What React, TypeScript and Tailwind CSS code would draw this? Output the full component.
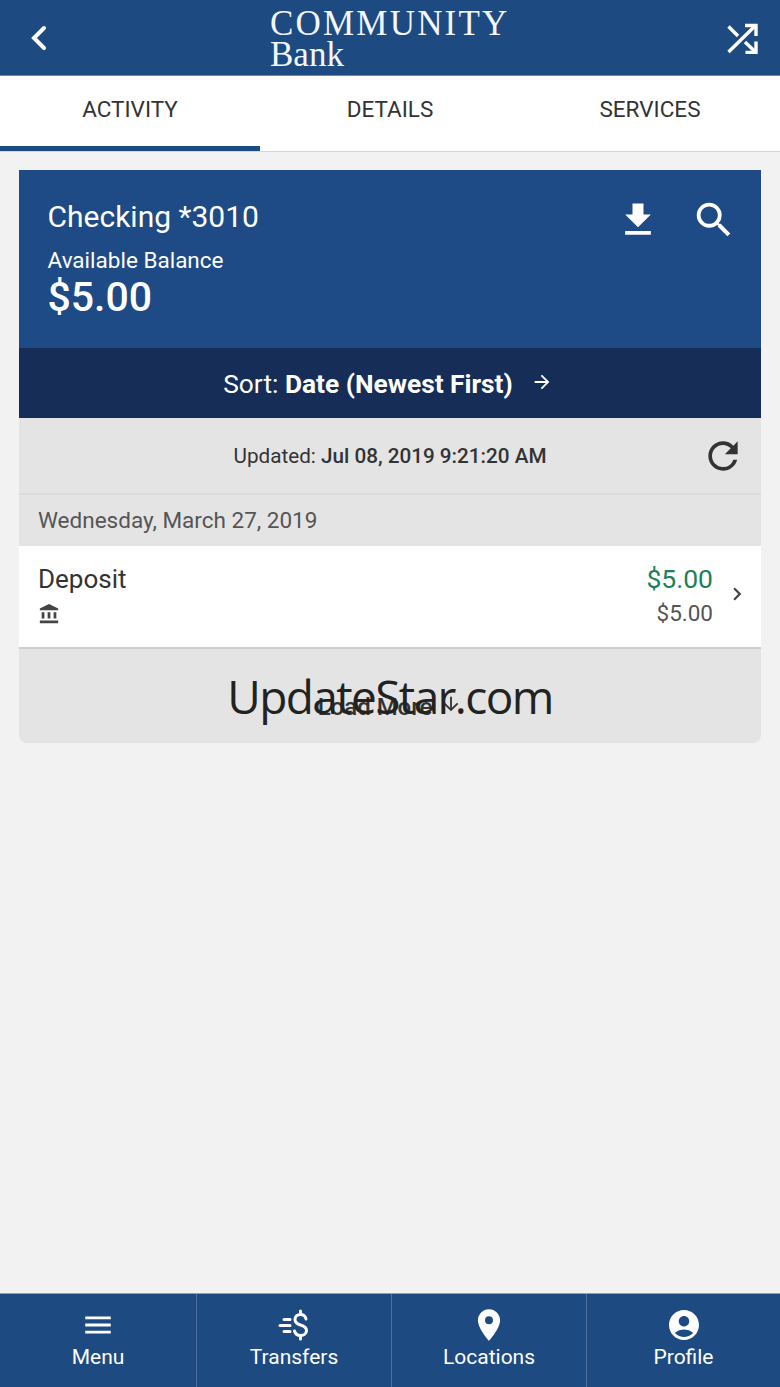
import {
  MdAccountBalance,
  MdAccountCircle,
  MdArrowForward,
  MdChevronRight,
  MdFileDownload,
  MdMenu,
  MdPlace,
  MdRefresh,
  MdSearch,
} from "react-icons/md";

const tabs = ["ACTIVITY", "DETAILS", "SERVICES"];

function TransfersIcon() {
  return (
    <svg width="32" height="32" viewBox="0 0 32 32" fill="none" stroke="white" strokeLinecap="round" strokeWidth="3" className="ml-[-2px]">
      <path d="M7 10.5H13M3 16.5H13M7 22.5H13" />
      <path d="M29 10C28.4 7.2 26.4 5.5 23.5 5.5C20.2 5.5 18 7.6 18 10.5C18 13.6 20.4 15 23.5 16C27 17 29.5 18.5 29.5 21.5C29.5 24.6 27 26.5 23.5 26.5C20.5 26.5 18.3 24.7 17.5 22M23.5 2V5.5M23.5 26.5V30" />
    </svg>
  );
}

function ShuffleIcon() {
  return (
    <svg width="32" height="32" viewBox="0 0 32 32" fill="none" stroke="white" strokeWidth="3.4" className="ml-auto">
      <path d="M2.5 30L29 4M2.5 4.5L12 14M19 20L29 29.5" />
      <path d="M19 3.5H30V14M30 19.5V30.5H19.5" />
    </svg>
  );
}

const navItems = [
  { label: "Menu", icon: <MdMenu className="text-[34px] text-white" /> },
  { label: "Transfers", icon: <TransfersIcon /> },
  { label: "Locations", icon: <MdPlace className="text-[38px] text-white" /> },
  { label: "Profile", icon: <MdAccountCircle className="text-[36px] text-white" /> },
];

export default function App() {
  return (
    <div className="flex h-[1387px] w-[780px] flex-col overflow-hidden bg-[#f2f2f3] font-['Roboto',sans-serif]">
      <header className="flex h-[76px] shrink-0 items-center border-b border-[#6a84b3] bg-[#1e4a82] pl-[29px] pr-[22px]">
        <svg width="18" height="26" viewBox="0 0 18 26" fill="none" className="shrink-0">
          <path d="M15 3 L5 13 L15 23" stroke="white" strokeWidth="4" strokeLinecap="round" strokeLinejoin="miter" />
        </svg>
        <div className="ml-[223px] mt-[5px] flex flex-col font-['Liberation_Serif',serif] text-[#f3f6fa]">
          <span className="text-[35px] leading-[29px] tracking-[2.2px]">COMMUNITY</span>
          <span className="text-[35px] leading-[33px]">Bank</span>
        </div>
        <ShuffleIcon />
      </header>

      <nav className="flex h-[76px] shrink-0 border-b border-[#d5d5d6] bg-white">
        {tabs.map((t, i) => (
          <div
            key={t}
            className={`flex flex-1 items-center justify-center border-b-[5px] pb-[3px] text-[22.5px] text-[#333333] ${
              i === 0 ? "border-[#1e4a82]" : "border-transparent"
            }`}
          >
            {t}
          </div>
        ))}
      </nav>

      <main className="mx-[19px] mt-[18px] overflow-hidden rounded-b-[8px]">
        <section className="flex h-[178px] bg-[#1e4b85] pl-[28.5px] pr-[24px] pt-[29px] text-white">
          <div className="flex-1">
            <div className="text-[30px] leading-[36px]">Checking *3010</div>
            <div className="mt-[12px] text-[22.5px] leading-[26px]">Available Balance</div>
            <div className="mt-[2px] text-[41px] font-medium leading-[44px]">$5.00</div>
          </div>
          <div className="flex items-start gap-[31px]">
            <MdFileDownload className="mt-[-1px] text-[44px]" />
            <MdSearch className="mt-[-2px] text-[46px]" />
          </div>
        </section>

        <section className="flex h-[70px] items-center justify-center bg-[#162e57] pr-[4px] text-[26.3px] text-white">
          <span className="pt-[3px]">
            Sort: <span className="font-bold">Date (Newest First)</span>
          </span>
          <MdArrowForward className="mb-[3px] ml-[18px] text-[22px]" />
        </section>

        <section className="relative flex h-[77px] items-center justify-center border-b-2 border-[#dcdbdc] bg-[#e5e4e5] text-[20.7px] text-[#333333]">
          <span className="pt-[3px]">
            Updated: <span className="font-medium">Jul 08, 2019 9:21:20 AM</span>
          </span>
          <MdRefresh className="absolute right-[16px] top-[16px] text-[44px]" />
        </section>

        <section className="flex h-[51px] items-center bg-[#e5e4e5] pl-[19px] text-[22.5px] text-[#555555]">
          Wednesday, March 27, 2019
        </section>

        <section className="flex h-[103px] items-center justify-between border-b-2 border-[#cfcfd0] bg-white pl-[19px] pr-[11px]">
          <div className="pt-[1px]">
            <div className="mt-[-7px] text-[26px] leading-[32px] text-[#333333]">Deposit</div>
            <MdAccountBalance className="mt-[8px] text-[22px] text-[#444444]" />
          </div>
          <div className="flex items-center">
            <div className="mt-[-4px] text-right">
              <div className="text-[26.5px] leading-[32px] text-[#1f7f57]">$5.00</div>
              <div className="mt-[4px] text-[22.5px] leading-[28px] text-[#555555]">$5.00</div>
            </div>
            <MdChevronRight className="mb-[6px] ml-[11px] text-[26px] text-[#444444]" />
          </div>
        </section>

        <section className="relative flex h-[94px] items-center justify-center bg-[#e5e4e5]">
          <span className="mt-[22px] flex items-center gap-[8px] text-[24px] font-medium text-[#333333]">
            Load More <MdArrowForward className="mb-[6px] rotate-90 text-[22px]" />
          </span>
          <span className="absolute left-0 right-0 top-[18px] text-center font-['Open_Sans',sans-serif] text-[46px] leading-[58px] tracking-[-1.6px] text-[#222222]">
            UpdateStar.com
          </span>
        </section>
      </main>

      <footer className="mt-auto grid h-[94px] shrink-0 grid-cols-[197px_195px_195px_193px] border-t border-[#8ba0c4] bg-[#1e4a82]">
        {navItems.map((n, i) => (
          <div
            key={n.label}
            className={`flex flex-col items-center pt-[12px] text-white ${i < 3 ? "border-r border-[#4f709f]" : ""}`}
          >
            <div className="flex h-[38px] items-center justify-center">{n.icon}</div>
            <div className="text-[21px] leading-[26px]">{n.label}</div>
          </div>
        ))}
      </footer>
    </div>
  );
}
